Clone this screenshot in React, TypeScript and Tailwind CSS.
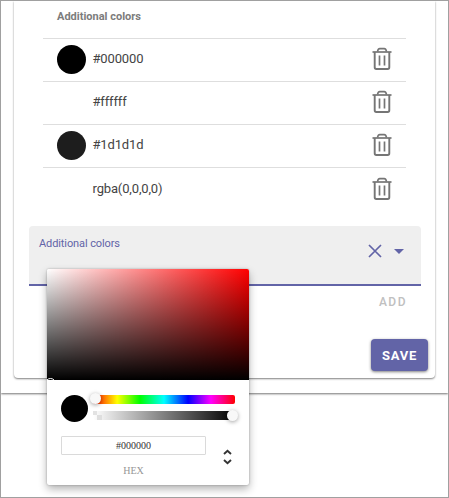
const savedColors = [
  { value: "#000000", swatch: "bg-black" },
  { value: "#ffffff", swatch: "bg-white" },
  { value: "#1d1d1d", swatch: "bg-[#1d1d1d]" },
  { value: "rgba(0,0,0,0)", swatch: "bg-transparent" },
];

function TrashIcon() {
  return (
    <svg width="20" height="24" viewBox="0 0 20 24" fill="none" stroke="#757575">
      <path d="M0.5 5H19.5" strokeWidth="1.7" />
      <path d="M5.5 4.7C5.8 2.5 6.5 1.6 7.8 1.6H12.2C13.5 1.6 14.2 2.5 14.5 4.7" strokeWidth="1.7" />
      <path d="M2.7 5V20.3Q2.7 22 4.3 22H15.7Q17.3 22 17.3 20.3V5" strokeWidth="1.9" />
      <path d="M7.5 8.5V18.5M12.5 8.5V18.5" strokeWidth="1.7" />
    </svg>
  );
}

function ColorRow({ value, swatch, last }: { value: string; swatch: string; last: boolean }) {
  return (
    <div className={`flex h-[43px] items-start px-[14px] ${last ? "pt-px" : "border-b border-[#dedede]"}`}>
      <span className={`mt-[6px] size-[29px] shrink-0 rounded-full ${swatch}`} />
      <span className="ml-[6.5px] mt-[11px] flex-1 text-[13px] leading-[18px] tracking-[-0.15px] text-[#444]">{value}</span>
      <button aria-label="Delete" className="mt-[8px]">
        <TrashIcon />
      </button>
    </div>
  );
}

function Knob({ className }: { className: string }) {
  return <span className={`absolute size-[11px] rounded-full bg-[#f8f8f8] shadow-[0_1px_4px_rgba(0,0,0,0.37)] ${className}`} />;
}

function ColorPicker() {
  return (
    <div className="absolute left-[46px] top-[268px] h-[216px] w-[202px] rounded-[2px] bg-white shadow-[0_0_2px_rgba(0,0,0,0.3),0_4px_8px_rgba(0,0,0,0.3)]">
      <div className="relative h-[111px] overflow-hidden rounded-t-[2px] bg-[linear-gradient(to_top,#000,transparent),linear-gradient(to_right,#fff,#f00)]">
        <span className="absolute -bottom-[9px] -left-[2px] size-[11px] rounded-full border border-white" />
      </div>
      <div className="flex h-[42px] px-[14px] pt-[15px]">
        <span className="size-[27px] shrink-0 rounded-full bg-black" />
        <div className="ml-[5px] flex flex-1 flex-col gap-[7px]">
          <div className="relative h-[9px] rounded-[2px] bg-[linear-gradient(to_right,#f00_0%,#ff0_17%,#0f0_33%,#0ff_50%,#00f_67%,#f0f_83%,#f00_100%)]">
            <Knob className="-left-[3px] -top-[2px]" />
          </div>
          <div className="relative h-[9px] rounded-[2px] bg-[linear-gradient(to_right,#fff,#000)]">
            <span className="absolute left-0 top-0 size-[4px] bg-[#e2e2e2]" />
            <span className="absolute left-[4px] top-[4px] size-[5px] bg-[#dedede]" />
            <Knob className="-right-[3px] -top-px" />
          </div>
        </div>
      </div>
      <div className="flex items-start pl-[14px] pt-[14px]">
        <div className="w-[145px]">
          <input
            readOnly
            aria-label="Hex color"
            value="#000000"
            className="block h-[19px] w-full rounded-[1px] border border-[#dadada] bg-white text-center font-['Liberation_Serif',serif] text-[10px] text-[#333] outline-none"
          />
          <div className="mt-[9px] text-center font-['Liberation_Serif',serif] text-[10px] leading-[13px] text-[#969696]">HEX</div>
        </div>
        <svg className="ml-[17px] mt-[13px]" width="9" height="16" viewBox="0 0 9 16" fill="none" stroke="#333" strokeWidth="1.9">
          <path d="M1 5L4.5 1.8L8 5M1 11L4.5 14.2L8 11" />
        </svg>
      </div>
    </div>
  );
}

export default function App() {
  return (
    <div className="relative h-[498px] w-[449px] overflow-hidden border border-[#a0a0a0] bg-white font-[Roboto,sans-serif]">
      <div className="h-[392px] overflow-hidden bg-white shadow-[0_1px_2px_rgba(0,0,0,0.55)]">
        <main className="ml-[13px] flex h-[377px] w-[421px] flex-col rounded-b-[4px] bg-white px-[15px] shadow-[0_1px_2px_rgba(0,0,0,0.5)]">
          <section className="ml-[14px] w-[363px]">
            <h2 className="h-[38px] border-b border-[#dedede] pl-[14px] pt-[8px] text-[11px] font-bold leading-[16px] text-[#7c7c7c]">Additional colors</h2>
            {savedColors.map((color, i) => (
              <ColorRow key={color.value} {...color} last={i === savedColors.length - 1} />
            ))}
          </section>
          <div className="-mr-px mt-[15px] flex h-[60px] shrink-0 justify-between rounded-t-[4px] border-b-2 border-[#6264a7] bg-[#efefef] pl-[10px] pr-[17px] text-[#6264a7]">
            <label className="pt-[11px] text-[11px] leading-[14px] tracking-[-0.1px]">Additional colors</label>
            <div className="flex h-[50px] items-center gap-[12px]">
              <svg width="14" height="14" viewBox="0 0 14 14" fill="none" stroke="currentColor" strokeWidth="1.7">
                <path d="M1 1L13 13M13 1L1 13" />
              </svg>
              <svg width="10" height="5" viewBox="0 0 10 5" fill="currentColor">
                <path d="M0 0H10L5 5Z" />
              </svg>
            </div>
          </div>
          <button disabled className="mr-[13px] mt-[8px] self-end text-[12px] font-medium leading-[16px] tracking-[1.5px] text-[#c0c0c0]">ADD</button>
          <button className="mr-[-8px] mt-[29px] flex h-8 w-[57px] shrink-0 items-center justify-center self-end rounded-[4px] bg-[#6264a7] pt-px text-[13px] font-bold tracking-[0.8px] text-white shadow-[0_1px_3px_rgba(0,0,0,0.5)]">SAVE</button>
        </main>
      </div>
      <ColorPicker />
    </div>
  );
}
